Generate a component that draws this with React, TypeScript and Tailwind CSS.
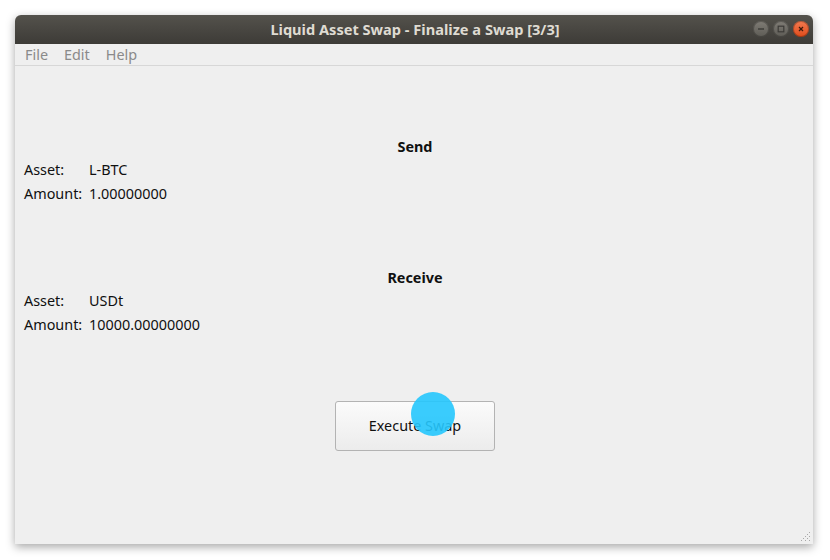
import React from 'react';

const WinButton: React.FC<{ kind: 'min' | 'max' | 'close' }> = ({ kind }) => {
  const isClose = kind === 'close';
  return (
    <div
      className={`w-4 h-4 rounded-full flex items-center justify-center ${
        isClose ? 'bg-gradient-to-b from-[#f37a4f] to-[#df4a16]' : 'bg-gradient-to-b from-[#807d76] to-[#5d5b55]'
      } shadow-[inset_0_0_0_1px_rgba(0,0,0,0.25)]`}
    >
      <svg width="10" height="10" viewBox="0 0 10 10">
        {kind === 'min' && <line x1="2" y1="5" x2="8" y2="5" stroke="#3c3b37" strokeWidth="1.4" />}
        {kind === 'max' && <rect x="2.2" y="2.2" width="5.6" height="5.6" fill="none" stroke="#3c3b37" strokeWidth="1.2" />}
        {kind === 'close' && (
          <g stroke="#3c1a0c" strokeWidth="1.3">
            <line x1="3" y1="3" x2="7" y2="7" />
            <line x1="7" y1="3" x2="3" y2="7" />
          </g>
        )}
      </svg>
    </div>
  );
};

const Row: React.FC<{ label: string; value: string }> = ({ label, value }) => (
  <div className="flex h-6 items-center">
    <span className="w-[65px]">{label}</span>
    <span>{value}</span>
  </div>
);

export default function App() {
  return (
    <div
      className="w-[830px] h-[560px] bg-white pt-[15px] pl-[15px] text-[14.4px] text-[#101010]"
      style={{ fontFamily: '"Noto Sans", "DejaVu Sans", sans-serif' }}
    >
      <div className="w-[798px] h-[529px] flex flex-col bg-[#efefef] rounded-t-[6px] shadow-[0_3px_10px_rgba(0,0,0,0.35)]">
        {/* title bar */}
        <div className="relative h-[29px] shrink-0 rounded-t-[6px] bg-gradient-to-b from-[#54524c] to-[#3d3b37] flex items-center justify-center">
          <span className="text-[#dfdbd2] font-bold text-[14.6px] pl-[2px]">Liquid Asset Swap - Finalize a Swap [3/3]</span>
          <div className="absolute right-[4px] top-[6px] flex gap-[4px]">
            <WinButton kind="min" />
            <WinButton kind="max" />
            <WinButton kind="close" />
          </div>
        </div>

        {/* menu bar */}
        <div className="h-[22px] shrink-0 border-b border-[#d7d7d7] flex items-center gap-[16px] pl-[10px] text-[#8a8a8a]">
          <span>File</span>
          <span>Edit</span>
          <span>Help</span>
        </div>

        {/* content */}
        <div className="relative flex-1 flex flex-col pl-[9px]">
          <div className="mt-[70px] h-[22px] flex items-center justify-center font-bold pr-[7px]">Send</div>
          <Row label="Asset:" value="L-BTC" />
          <Row label="Amount:" value="1.00000000" />

          <div className="mt-[61px] h-[22px] flex items-center justify-center font-bold pr-[7px]">Receive</div>
          <Row label="Asset:" value="USDt" />
          <Row label="Amount:" value="10000.00000000" />

          <div className="mt-[64px] flex justify-center pr-[7px]">
            <div className="relative w-[160px] h-[50px] rounded-[3px] border border-[#b3b3b3] bg-gradient-to-b from-[#fbfbfb] to-[#ececec] flex items-center justify-center">
              Execute Swap
              <div className="absolute left-[75px] top-[-10px] w-[44px] h-[44px] rounded-full bg-[#25c6fd]/90" />
            </div>
          </div>

          {/* resize grip */}
          <svg className="absolute right-[2px] bottom-[2px]" width="12" height="12" viewBox="0 0 12 12">
            {[
              [10, 2], [8, 4], [10, 4], [6, 6], [8, 6], [10, 6], [4, 8], [6, 8], [8, 8], [10, 8], [2, 10], [4, 10], [6, 10], [8, 10], [10, 10],
            ]
              .filter(([x, y]) => (x + y) % 4 === 0)
              .map(([x, y]) => (
                <rect key={`${x}-${y}`} x={x} y={y} width="1" height="1" fill="#a8a8a8" />
              ))}
          </svg>
        </div>
      </div>
    </div>
  );
}
